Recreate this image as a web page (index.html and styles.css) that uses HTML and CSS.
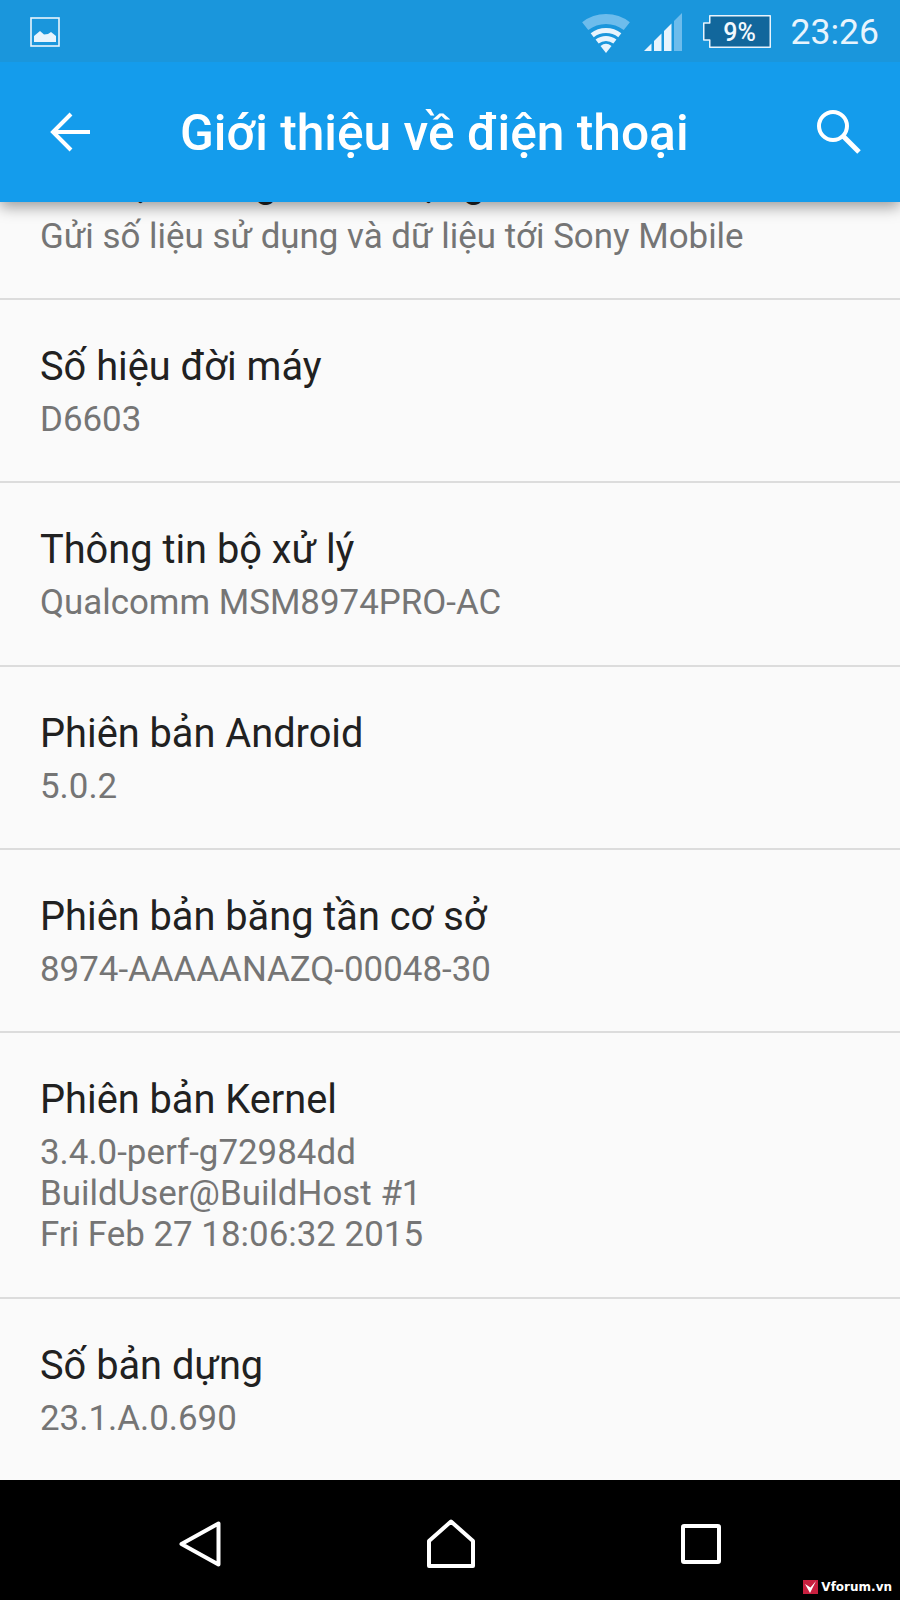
FILE: index.html
```html
<!DOCTYPE html>
<html lang="en">
<head>
    <meta charset="UTF-8">
    <title>Giới thiệu về điện thoại</title>
    <link rel="stylesheet" href="styles.css">
</head>
<body>
    <div class="phone">
        <div class="status-bar">
            <svg class="notif-icon" width="30" height="30" viewBox="0 0 30 30">
                <rect x="1" y="1" width="28" height="28" fill="none" stroke="#e8f4fd" stroke-width="1.6"/>
                <path d="M4 25V19L10 14L14 17.5L18 17L21 15L26 19V25Z" fill="#e8f4fd"/>
            </svg>
            <div class="status-right">
                <svg class="wifi" width="50" height="42" viewBox="0 0 50 42">
                    <path d="M4.2 14.100A34 34 0 0 1 45.800 14.100" fill="none" stroke="#6dbcec" stroke-width="10"/>
                    <path d="M11.200 23.200A22.500 22.500 0 0 1 38.800 23.200" fill="none" stroke="#e8f4fd" stroke-width="5"/>
                    <path d="M16.100 29.500A14.500 14.500 0 0 1 33.900 29.500" fill="none" stroke="#e8f4fd" stroke-width="5"/>
                    <path d="M25 41L19.500 33.900A9 9 0 0 1 30.500 33.900Z" fill="#e8f4fd"/>
                </svg>
                <svg class="signal" width="38" height="38" viewBox="0 0 38 38">
                    <path d="M0 38L7.500 30.500V38Z" fill="#e8f4fd"/>
                    <path d="M10 38V28L17.500 20.500V38Z" fill="#e8f4fd"/>
                    <path d="M20 38V18L27.500 10.500V38Z" fill="#e8f4fd"/>
                    <path d="M30 38V8L38 0V38Z" fill="#6dbcec"/>
                </svg>
                <div class="battery">
                    <svg width="68" height="33" viewBox="0 0 68 33">
                        <path d="M6.750 0.750H67.250V32.250H6.750V25H0.750V8H6.750Z" fill="#12679c" stroke="#e8f4fd" stroke-width="1.500" stroke-linejoin="round"/>
                    </svg>
                    <span class="battery-level">9%</span>
                </div>
                <span class="clock">23:26</span>
            </div>
        </div>

        <div class="app-bar">
            <svg class="back-icon" width="40" height="40" viewBox="0 0 40 40">
                <path d="M40 20H4M21 2L3 20L21 38" fill="none" stroke="#fff" stroke-width="4"/>
            </svg>
            <h1>Giới thiệu về điện thoại</h1>
            <svg class="search-icon" width="44" height="44" viewBox="0 0 44 44">
                <circle cx="16" cy="16" r="14" fill="none" stroke="#fff" stroke-width="4"/>
                <path d="M26 26L42 42" stroke="#fff" stroke-width="5"/>
            </svg>
        </div>

        <div class="list">
            <div class="item">
                <div class="item-title">Cài đặt thông tin sử dụng</div>
                <div class="item-sub">Gửi số liệu sử dụng và dữ liệu tới Sony Mobile</div>
            </div>
            <div class="item">
                <div class="item-title">Số hiệu đời máy</div>
                <div class="item-sub">D6603</div>
            </div>
            <div class="item">
                <div class="item-title">Thông tin bộ xử lý</div>
                <div class="item-sub">Qualcomm MSM8974PRO-AC</div>
            </div>
            <div class="item">
                <div class="item-title">Phiên bản Android</div>
                <div class="item-sub">5.0.2</div>
            </div>
            <div class="item">
                <div class="item-title">Phiên bản băng tần cơ sở</div>
                <div class="item-sub">8974-AAAAANAZQ-00048-30</div>
            </div>
            <div class="item">
                <div class="item-title">Phiên bản Kernel</div>
                <div class="item-sub">3.4.0-perf-g72984dd<br>BuildUser@BuildHost #1<br>Fri Feb 27 18:06:32 2015</div>
            </div>
            <div class="item">
                <div class="item-title">Số bản dựng</div>
                <div class="item-sub">23.1.A.0.690</div>
            </div>
        </div>

        <div class="nav-bar">
            <svg width="42" height="46" viewBox="0 0 42 46">
                <path d="M39.500 2.500V43.500L2.500 23Z" fill="none" stroke="#fff" stroke-width="4" stroke-linejoin="round"/>
            </svg>
            <svg width="48" height="49" viewBox="0 0 48 49">
                <path d="M24 2.500L46 22V47H2V22Z" fill="none" stroke="#fff" stroke-width="4" stroke-linejoin="round"/>
            </svg>
            <svg width="40" height="40" viewBox="0 0 40 40">
                <rect x="2" y="2" width="36" height="36" rx="1" fill="none" stroke="#fff" stroke-width="4"/>
            </svg>
            <div class="watermark">
                <svg width="15" height="14" viewBox="0 0 15 14">
                    <rect width="15" height="14" fill="#c8203f"/>
                    <path d="M2 4L7 13L13 1L7.500 7.500Z" fill="#fff"/>
                </svg>
                <span>Vforum.vn</span>
            </div>
        </div>
    </div>
</body>
</html>
```

FILE: styles.css
```css
html, body {
    margin: 0;
    padding: 0;
}
body {
    font-family: 'Roboto', sans-serif;
    background-color: #fafafa;
}
.phone {
    width: 900px;
    height: 1600px;
    display: flex;
    flex-direction: column;
    overflow: hidden;
    position: relative;
}
.status-bar {
    height: 62px;
    flex: none;
    background-color: #1a96dc;
    display: flex;
    justify-content: space-between;
    align-items: center;
    padding: 0 21px 0 30px;
    position: relative;
    z-index: 3;
}
.notif-icon {
    margin-top: 2px;
}
.status-right {
    display: flex;
    align-items: center;
}
.wifi {
    margin-top: 4px;
}
.signal {
    margin-left: 13px;
    margin-top: 2px;
}
.battery {
    position: relative;
    width: 68px;
    height: 33px;
    margin-left: 21px;
}
.battery svg {
    display: block;
}
/* Percentage sits on top of the drawn battery */
.battery-level {
    position: absolute;
    top: 0;
    left: 6px;
    right: 0;
    line-height: 35px;
    color: #f2f9fe;
    font-size: 25px;
    font-weight: 500;
    text-align: center;
}
.clock {
    font-size: 35.5px;
    color: #e8f4fd;
    margin-left: 20px;
    margin-top: 2px;
}
.app-bar {
    height: 140px;
    flex: none;
    background-color: #149cec;
    display: flex;
    align-items: center;
    padding: 0 39px 0 50px;
    position: relative;
    z-index: 2;
    box-shadow: 0 5px 14px rgba(0, 0, 0, 0.38);
}
.app-bar h1 {
    flex: 1;
    margin: 0;
    padding: 2px 0 0 90px;
    font-size: 49.7px;
    font-weight: 500;
    color: #fff;
}
.list {
    flex: 1;
    min-height: 0;
    display: flex;
    flex-direction: column;
    justify-content: flex-end;
    overflow: hidden;
}
.item {
    flex: none;
    padding: 43px 40px 41.3px 40px;
    border-bottom: 2px solid #dcdcdc;
}
.item:last-child {
    padding-bottom: 41.5px;
    border-bottom: none;
}
.item-title {
    font-size: 39.75px;
    line-height: 48px;
    color: #212121;
}
.item-sub {
    font-size: 34.9px;
    line-height: 41px;
    margin-top: 8px;
    color: #757575;
}
.nav-bar {
    height: 120px;
    flex: none;
    box-sizing: border-box;
    padding-top: 7px;
    background-color: #000;
    display: flex;
    justify-content: center;
    align-items: center;
    gap: 206px;
    position: relative;
}
.watermark {
    position: absolute;
    right: 8px;
    bottom: 6px;
    display: flex;
    align-items: center;
    gap: 3px;
    font-family: 'DejaVu Sans', sans-serif;
    font-size: 12px;
    font-weight: 700;
    color: #fff;
}
```
